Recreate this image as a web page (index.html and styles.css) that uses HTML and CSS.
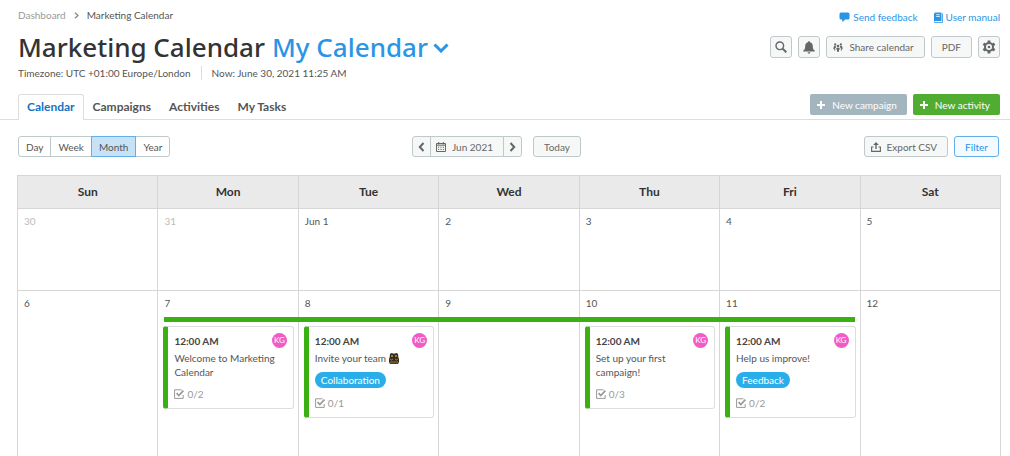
FILE: index.html
```html
<!DOCTYPE html>
<html lang="en">
<head>
    <meta charset="UTF-8">
    <meta name="viewport" content="width=device-width, initial-scale=1.0">
    <title>Marketing Calendar</title>
    <link rel="stylesheet" href="styles.css">
</head>
<body>
    <!-- icons used more than once -->
    <svg class="defs" aria-hidden="true">
        <symbol id="plus" viewBox="0 0 10 10"><path d="M5 1v8M1 5h8" fill="none" stroke="currentColor" stroke-width="2"/></symbol>
        <symbol id="check" viewBox="0 0 10 10">
            <path d="M7.5 .8H.6v8.6h8.6V6" fill="none" stroke="currentColor" stroke-width="1"/>
            <path d="M2.6 4.2l2.2 2.3L9.4 1.6" fill="none" stroke="currentColor" stroke-width="1.7"/>
        </symbol>
    </svg>

    <header class="header">
        <div class="header-left">
            <nav class="breadcrumb">
                <a href="#">Dashboard</a>
                <svg width="5" height="7" viewBox="0 0 5 7"><path d="M1 .7l3 2.8-3 2.8" fill="none" stroke="#888" stroke-width="1.3"/></svg>
                <span>Marketing Calendar</span>
            </nav>
            <div class="title">
                <h1>Marketing Calendar</h1>
                <button class="calendar-name">My Calendar
                    <svg width="16" height="11" viewBox="0 0 16 11"><path d="M1.500 2.500L8 9l6.500-6.500" fill="none" stroke="currentColor" stroke-width="3"/></svg>
                </button>
            </div>
            <div class="info">
                <span>Timezone: UTC +01:00 Europe/London</span>
                <span class="now">Now: June 30, 2021 11:25 AM</span>
            </div>
        </div>
        <div class="header-right">
            <div class="help">
                <a href="#">
                    <svg width="11" height="10" viewBox="0 0 11 10"><path d="M2 .5h7A1.500 1.500 0 0 1 10.500 2v4A1.500 1.500 0 0 1 9 7.500H6.200L3.500 10 3 7.500H2A1.500 1.500 0 0 1 .5 6V2A1.500 1.500 0 0 1 2 .5z" fill="currentColor"/></svg>
                    Send feedback
                </a>
                <a href="#">
                    <svg width="9" height="11" viewBox="0 0 9 11"><path d="M1.500 .5H7.500V9H0V2A1.500 1.500 0 0 1 1.500 .5z" fill="currentColor"/><path d="M.5 9.300v1.200h8V1.500" fill="none" stroke="currentColor" stroke-width=".8"/><path d="M2.200 2.700h3.600M2.200 4.500h3.600" stroke="#fff" stroke-width=".8"/></svg>
                    User manual
                </a>
            </div>
            <div class="tools">
                <button class="btn btn-icon" aria-label="Search">
                    <svg width="12" height="12" viewBox="0 0 12 12" fill="none" stroke="currentColor"><circle cx="4.800" cy="4.800" r="3.800" stroke-width="1.400"/><path d="M7.600 7.600l3.700 3.700" stroke-width="2"/></svg>
                </button>
                <button class="btn btn-icon" aria-label="Notifications">
                    <svg width="12" height="13" viewBox="0 0 12 13" fill="currentColor"><path d="M6 .3c.7 0 1 .4 1 1C9 1.800 9.800 3.300 9.800 5c0 2.700.6 3.700 2 4.600v1H.2v-1c1.400-.9 2-1.900 2-4.600C2.200 3.300 3 1.800 5 1.300c0-.6.3-1 1-1zM4.600 11.300h2.800a1.400 1.400 0 0 1-2.800 0z"/></svg>
                </button>
                <button class="btn btn-share">
                    <svg width="10" height="9" viewBox="0 0 10 9" fill="currentColor"><circle cx="2.200" cy="1.400" r="1.100"/><circle cx="7.800" cy="1.400" r="1.100"/><circle cx="5" cy="3" r="1.300"/><path d="M1.200 2.700h1.600l.2 1.800-.8.6V7.500H1.200V5.500L0 6zM8.800 2.700H7.200L7 4.500l.8.6V7.500h1V5.500L10 6zM3.400 4.700h3.200v2.100H6v2H4v-2h-.6z"/></svg>
                    Share calendar
                </button>
                <button class="btn btn-pdf">PDF</button>
                <button class="btn btn-icon" aria-label="Settings">
                    <svg width="14" height="14" viewBox="0 0 14 14"><circle cx="7" cy="7" r="4" fill="none" stroke="currentColor" stroke-width="2"/><circle cx="7" cy="7" r="1.300" fill="currentColor"/><path d="M7 .5v2.500M7 11v2.500M1.400 3.750l2.100 1.250M10.500 9l2.100 1.250M1.400 10.250l2.100-1.250M10.500 5l2.100-1.250" stroke="currentColor" stroke-width="2.800"/></svg>
                </button>
            </div>
        </div>
    </header>

    <div class="tab-row">
        <nav class="tabs">
            <a href="#" class="active">Calendar</a>
            <a href="#">Campaigns</a>
            <a href="#">Activities</a>
            <a href="#">My Tasks</a>
        </nav>
        <div class="create">
            <button class="btn-new"><svg width="10" height="10"><use href="#plus"/></svg>New campaign</button>
            <button class="btn-new green"><svg width="10" height="10"><use href="#plus"/></svg>New activity</button>
        </div>
    </div>

    <div class="toolbar">
        <div class="group views">
            <button>Day</button>
            <button>Week</button>
            <button class="selected">Month</button>
            <button>Year</button>
        </div>
        <div class="period">
            <div class="group month">
                <button aria-label="Previous month"><svg width="7" height="10" viewBox="0 0 7 10"><path d="M5.500 1L1.800 5l3.700 4" fill="none" stroke="currentColor" stroke-width="2"/></svg></button>
                <button class="current">
                    <svg width="10" height="10" viewBox="0 0 10 10"><path d="M.5 1.500h9v8h-9z" fill="none" stroke="currentColor"/><path d="M.5 3.200h9M2.700 0v2.500M7.300 0v2.500" stroke="currentColor"/><path d="M2 5.200h6M2 7.400h6" stroke="currentColor" stroke-dasharray="1.200 1.200"/></svg>
                    Jun 2021
                </button>
                <button aria-label="Next month"><svg width="7" height="10" viewBox="0 0 7 10"><path d="M1.500 1l3.700 4-3.700 4" fill="none" stroke="currentColor" stroke-width="2"/></svg></button>
            </div>
            <button class="btn">Today</button>
        </div>
        <div class="actions">
            <button class="btn">
                <svg width="10" height="10" viewBox="0 0 10 10"><path d="M2.500 5H.6v4.400h8.800V5H7.500" fill="none" stroke="currentColor" stroke-width="1.100"/><path d="M5 0l2.800 3H5.700v4H4.300V3H2.200z" fill="currentColor"/></svg>
                Export CSV
            </button>
            <button class="btn btn-filter">Filter</button>
        </div>
    </div>

    <main class="calendar">
        <table>
            <thead>
                <tr><th>Sun</th><th>Mon</th><th>Tue</th><th>Wed</th><th>Thu</th><th>Fri</th><th>Sat</th></tr>
            </thead>
            <tbody>
                <tr>
                    <td class="other"><span class="date">30</span></td>
                    <td class="other"><span class="date">31</span></td>
                    <td><span class="date">Jun 1</span></td>
                    <td><span class="date">2</span></td>
                    <td><span class="date">3</span></td>
                    <td><span class="date">4</span></td>
                    <td><span class="date">5</span></td>
                </tr>
                <tr class="week">
                    <td><span class="date">6</span></td>
                    <td>
                        <span class="date">7</span>
                        <div class="campaign"></div>
                        <article class="card">
                            <div class="card-top"><b>12:00 AM</b><span class="avatar">KG</span></div>
                            <p>Welcome to Marketing Calendar</p>
                            <div class="tasks"><svg width="10" height="10"><use href="#check"/></svg>0/2</div>
                        </article>
                    </td>
                    <td>
                        <span class="date">8</span>
                        <article class="card">
                            <div class="card-top"><b>12:00 AM</b><span class="avatar">KG</span></div>
                            <p>Invite your team
                                <svg width="10" height="11" viewBox="0 0 10 11"><path d="M1 1l1.500-1L5 .8 7.500 0 9 1l.3 3L10 6v3l-1 2H1L0 9V6l.7-2z" fill="#332c20"/><circle cx="3" cy="3" r="1.100" fill="#c98d28"/><circle cx="7" cy="3" r="1.100" fill="#c98d28"/><path d="M1 6l1.500 1L4 6M6 6l1.500 1L9 6M2 8v2.500M4 8v2.500M6 8v2.500M8 8v2.500" fill="none" stroke="#c98d28" stroke-width=".8"/></svg>
                            </p>
                            <span class="tag">Collaboration</span>
                            <div class="tasks"><svg width="10" height="10"><use href="#check"/></svg>0/1</div>
                        </article>
                    </td>
                    <td><span class="date">9</span></td>
                    <td>
                        <span class="date">10</span>
                        <article class="card">
                            <div class="card-top"><b>12:00 AM</b><span class="avatar">KG</span></div>
                            <p>Set up your first campaign!</p>
                            <div class="tasks"><svg width="10" height="10"><use href="#check"/></svg>0/3</div>
                        </article>
                    </td>
                    <td>
                        <span class="date">11</span>
                        <article class="card">
                            <div class="card-top"><b>12:00 AM</b><span class="avatar">KG</span></div>
                            <p>Help us improve!</p>
                            <span class="tag">Feedback</span>
                            <div class="tasks"><svg width="10" height="10"><use href="#check"/></svg>0/2</div>
                        </article>
                    </td>
                    <td><span class="date">12</span></td>
                </tr>
            </tbody>
        </table>
    </main>
</body>
</html>
```
FILE: styles.css
```css
*{
    box-sizing: border-box;
}
body{
    margin: 0;
    height: 100vh;
    display: flex;
    flex-direction: column;
    overflow: hidden;
    background-color: #fff;
    color: #555;
    font-family: Lato, "Noto Sans", sans-serif;
    font-size: 10px;
    line-height: 14px;
}
a{
    color: inherit;
    text-decoration: none;
}
button{
    font: inherit;
    color: inherit;
    cursor: pointer;
}
svg{
    flex: none;
}
.defs{
    position: absolute;
    width: 0;
    height: 0;
}

/* header */
.header{
    display: flex;
    justify-content: space-between;
    padding: 8px 10px 0 18px;
}
.breadcrumb{
    display: flex;
    align-items: center;
    gap: 8px;
}
.breadcrumb a{
    color: #999;
}
.title{
    display: flex;
    gap: 7px;
    margin-top: 8px;
    font-family: "Noto Sans", sans-serif;
    font-size: 26px;
    line-height: 34px;
}
.title h1{
    margin: 0;
    color: #333;
    font-size: 26px;
    font-weight: 500;
}
.calendar-name{
    display: flex;
    align-items: center;
    gap: 5px;
    padding: 0;
    border: 0;
    background: none;
    color: #2b95e5;
    font-weight: 500;
}
.info{
    display: flex;
    margin-top: 2px;
}
.now{
    margin-left: 10px;
    padding-left: 10px;
    border-left: 1px solid #ddd;
}
.header-right{
    display: flex;
    flex-direction: column;
    align-items: flex-end;
}
.help{
    display: flex;
    gap: 16px;
    margin-top: 2px;
    color: #2b95e5;
}
.help a{
    display: flex;
    align-items: center;
    gap: 3px;
}
.tools{
    display: flex;
    gap: 6px;
    margin-top: 12px;
}
.btn{
    display: flex;
    align-items: center;
    justify-content: center;
    gap: 6px;
    height: 22px;
    padding: 0 10px 0 6px;
    border: 1px solid #bfc8ca;
    border-radius: 3px;
    background-color: #f5f8f7;
    color: #666;
}
.btn-icon{
    width: 22px;
    padding: 0;
}
.btn-pdf{
    padding: 0 10px;
}

/* tabs */
.tab-row{
    display: flex;
    justify-content: space-between;
    align-items: flex-end;
    margin-top: 14px;
    padding: 0 10px 0 18px;
    border-bottom: 1px solid #ddd;
}
.tabs{
    display: flex;
    margin-bottom: -1px;
    font-size: 12px;
    font-weight: 700;
}
.tabs a{
    padding: 5px 8px 6px;
    border: 1px solid transparent;
    border-bottom: 0;
}
.tabs .active{
    border-color: #ddd;
    border-radius: 3px 3px 0 0;
    background-color: #fff;
    color: #1274c4;
}
.create{
    display: flex;
    gap: 6px;
    margin-bottom: 4px;
}
.btn-new{
    display: flex;
    align-items: center;
    gap: 6px;
    height: 21px;
    padding: 0 10px 0 6px;
    border: 0;
    border-radius: 2px;
    background-color: #a3b5be;
    color: #fff;
}
.green{
    background-color: #50ad32;
}

/* toolbar */
.toolbar{
    display: grid;
    grid-template-columns: 1fr auto 1fr;
    align-items: center;
    padding: 16px 11px 18px 18px;
}
.group{
    display: flex;
    justify-self: start;
}
.group button{
    display: flex;
    align-items: center;
    gap: 6px;
    height: 21px;
    margin-left: -1px;
    padding: 0 7px;
    border: 1px solid #bfc8ca;
    background-color: #fff;
}
.group button:first-child{
    margin-left: 0;
    border-radius: 3px 0 0 3px;
}
.group button:last-child{
    border-radius: 0 3px 3px 0;
}
.group .selected{
    position: relative;
    border-color: #62b0ea;
    background-color: #c7e2f7;
}
.month button{
    padding: 0 5px;
    background-color: #f5f8f7;
    color: #666;
}
.month .current{
    padding-right: 10px;
}
.period{
    display: flex;
    gap: 11px;
    margin-right: 24px;
}
.toolbar .btn{
    height: 21px;
}
.period .btn,
.actions .btn-filter{
    padding: 0 10px;
}
.actions{
    display: flex;
    justify-content: flex-end;
    gap: 6px;
}
.actions .btn-filter{
    border-color: #62b0ea;
    background-color: #f4faff;
    color: #2b95e5;
}

/* calendar */
.calendar{
    flex: 1;
    min-height: 0;
    padding: 0 9px 0 17px;
}
table{
    width: 100%;
    table-layout: fixed;
    border-collapse: collapse;
}
th,
td{
    border: 1px solid #d6d6d6;
}
th{
    height: 33px;
    padding: 0;
    background-color: #eaeaea;
    color: #333;
    font-size: 12px;
    font-weight: 700;
}
td{
    position: relative;
    height: 82px;
    padding: 5px;
    vertical-align: top;
}
.week td{
    height: 180px;
}
.date{
    display: block;
    padding-left: 1px;
}
.other{
    color: #bbb;
}
.campaign{
    position: absolute;
    z-index: 1;
    top: 26px;
    left: 6px;
    width: calc(500% - 7px);
    height: 5px;
    background-color: #3bb012;
}
.card{
    margin: 16px -1px 0 0;
    padding: 6px 6px 7px;
    border: 1px solid #ddd;
    border-left: 5px solid #3bb012;
    border-radius: 3px;
}
.card-top{
    display: flex;
    align-items: center;
    justify-content: space-between;
}
.card b{
    color: #444;
}
.avatar{
    width: 15px;
    height: 15px;
    border-radius: 50%;
    background-color: #f25bc5;
    color: #fff;
    font-size: 8px;
    line-height: 15px;
    text-align: center;
}
.card p{
    margin: 3px 0 0;
}
.card p svg{
    vertical-align: -2px;
}
.tag{
    display: inline-block;
    margin-top: 7px;
    padding: 1px 6px;
    border-radius: 8px;
    background-color: #2aaeea;
    color: #fff;
}
.tasks{
    display: flex;
    align-items: center;
    gap: 3px;
    margin-top: 8px;
    color: #999;
}
```
